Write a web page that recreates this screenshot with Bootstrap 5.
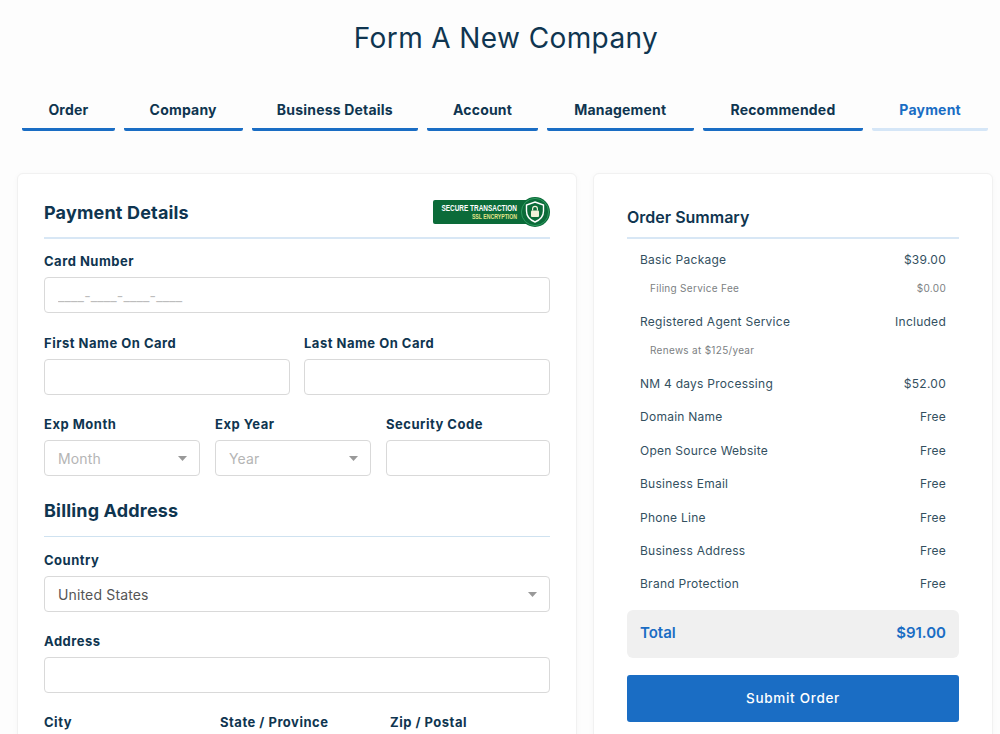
<!DOCTYPE html>
<html lang="en">
<head>
<meta charset="utf-8">
<title>Form A New Company</title>
<link rel="stylesheet" href="https://cdn.jsdelivr.net/npm/bootstrap@5.3.0/dist/css/bootstrap.min.css">
<style>
html,body{height:734px;overflow:hidden}
body{background:#fdfdfd;font-family:Inter,"Liberation Sans",sans-serif;color:#0f3550}
.page-wrap{padding:0 7px 0 17px}
.page-title{font-size:28px;font-weight:400;letter-spacing:.4px;line-height:36px;margin:0;padding-top:20px;text-align:center;color:#0f3550;padding-left:2px}
.step-bar{display:grid;grid-template-columns:93fr 119fr 167fr 111fr 147fr 161fr 116fr;column-gap:9px;margin:44px 5px 42px 5px}
.step-item{font-size:14px;font-weight:700;letter-spacing:.2px;text-align:center;color:#0f3550;padding-bottom:8px;line-height:20px;border-bottom:3px solid #1a6dc4;border-radius:2px}
.step-item.is-now{color:#1a6dc4;border-bottom-color:#d5e6f7}
.main-grid{display:grid;grid-template-columns:560px 400px;column-gap:16px}
.pane{background:#fff;border:1px solid #f1f1f1;border-radius:6px;box-shadow:0 1px 6px rgba(0,0,0,.03)}
.pane-left{padding:27px 26px 30px;height:700px}
.pane-right{padding:31px 33px 30px;height:700px}
.pane-head{display:flex;justify-content:space-between;align-items:center;border-bottom:2px solid #d8e7f5;padding-bottom:12px;box-sizing:content-box;height:24px}
.pane-head h2,.bill-head{font-size:18px;font-weight:700;letter-spacing:.17px;margin:0;color:#0f3550;line-height:24px}
.badge-art{margin-right:-1px;margin-top:-2px}
.bill-head{border-bottom:1px solid #cfe2f0;padding-bottom:13px;margin-top:23px}
.fld-label{display:block;font-size:13px;font-weight:700;letter-spacing:.5px;color:#0f3550;line-height:18px;margin:0 0 7px}
.form-control.fld,.form-select.fld{height:36px;font-size:14px;letter-spacing:.15px;padding:0 13px;border:1px solid #d9d9d9;border-radius:4px;color:#555;background-color:#fff;box-shadow:none}
.form-select.fld{background-image:url("data:image/svg+xml,%3Csvg xmlns='http://www.w3.org/2000/svg' width='10' height='6'%3E%3Cpath d='M0 0h10L5 6z' fill='%23999'/%3E%3C/svg%3E");background-size:9px 5px;background-position:right 12px center}
.form-select.fld.is-blank{color:#b5b5b5}
.form-control.fld::placeholder{color:#bdbdbd}
.fld-first{margin-top:13px}
.fld-country{margin-top:14px}
.fld-address{margin-top:20px}
.two-col{display:grid;grid-template-columns:246px 246px;column-gap:14px;margin-top:21px}
.three-col{display:grid;grid-template-columns:156px 156px 164px;column-gap:15px;margin-top:20px}
.city-col{display:grid;grid-template-columns:161px 155px 160px;column-gap:15px;margin-top:20px}
.sum-head{font-size:16px;font-weight:600;margin:0;color:#0f3550;line-height:24px;padding-bottom:8px;border-bottom:2px solid #d8e7f5}
.sum-list{padding:7px 13px 0}
.sum-row{display:flex;justify-content:space-between;align-items:center;font-size:12px;color:#33505f;height:33.4px;letter-spacing:.26px}
.sum-row.has-sub{height:28px}
.sum-sub{display:flex;justify-content:space-between;align-items:center;font-size:10px;letter-spacing:.3px;color:#7c7f83;height:28px;padding-left:10px;margin-bottom:6px}
.sum-sub.is-last{margin-bottom:3.3px}
.total-box{display:flex;justify-content:space-between;align-items:center;height:48px;background:#f0f0f0;border-radius:6px;padding:0 13px;margin-top:8.5px;font-size:15px;font-weight:600;color:#1a6dc4}
.submit-btn{display:block;width:100%;height:47px;margin-top:17px;background:#1a6dc4;border:0;border-radius:3px;color:#fff;font-size:13.5px;font-weight:500;letter-spacing:.7px}
.submit-btn:hover{background:#1a6dc4;color:#fff}
</style>
</head>
<body>
<div class="page-wrap">
  <h1 class="page-title">Form A New Company</h1>
  <div class="step-bar">
    <div class="step-item">Order</div>
    <div class="step-item">Company</div>
    <div class="step-item">Business Details</div>
    <div class="step-item">Account</div>
    <div class="step-item">Management</div>
    <div class="step-item">Recommended</div>
    <div class="step-item is-now">Payment</div>
  </div>
  <div class="main-grid">
    <div class="pane pane-left">
      <div class="pane-head">
        <h2>Payment Details</h2>
        <svg class="badge-art" width="118" height="32" viewBox="0 0 118 32" role="img" aria-label="Secure Transaction SSL Encryption">
          <rect x="0" y="4" width="104" height="24" rx="2" fill="#0b6b39"/>
          <circle cx="102" cy="16" r="15" fill="#0b6b39"/>
          <circle cx="102" cy="16" r="13.6" fill="none" stroke="#2e9a5f" stroke-width="1"/>
          <path d="M102 6l8.5 3v6c0 5.5-3.5 9-8.5 11-5-2-8.5-5.5-8.5-11V9z" fill="none" stroke="#fff" stroke-width="1.4"/>
          <rect x="98" y="14.5" width="8" height="6.5" rx="1" fill="#f0f0d8"/>
          <path d="M99.6 14.5v-1.8a2.4 2.4 0 0 1 4.8 0v1.8" fill="none" stroke="#f0f0d8" stroke-width="1.2"/>
          <text transform="translate(84 15) scale(.68 1)" text-anchor="end" font-family="Liberation Sans" font-size="9.5" font-weight="700" fill="#fff">SECURE TRANSACTION</text>
          <text transform="translate(84 23) scale(.74 1)" text-anchor="end" font-family="Liberation Sans" font-size="7" font-weight="700" fill="#e3e58a">SSL ENCRYPTION</text>
        </svg>
      </div>
      <div class="fld-first">
        <label class="fld-label">Card Number</label>
        <input class="form-control fld" placeholder="____-____-____-____">
      </div>
      <div class="two-col">
        <div><label class="fld-label">First Name On Card</label><input class="form-control fld"></div>
        <div><label class="fld-label">Last Name On Card</label><input class="form-control fld"></div>
      </div>
      <div class="three-col">
        <div><label class="fld-label">Exp Month</label><select class="form-select fld is-blank"><option>Month</option></select></div>
        <div><label class="fld-label">Exp Year</label><select class="form-select fld is-blank"><option>Year</option></select></div>
        <div><label class="fld-label">Security Code</label><input class="form-control fld"></div>
      </div>
      <h2 class="bill-head">Billing Address</h2>
      <div class="fld-country">
        <label class="fld-label">Country</label>
        <select class="form-select fld"><option>United States</option></select>
      </div>
      <div class="fld-address">
        <label class="fld-label">Address</label>
        <input class="form-control fld">
      </div>
      <div class="city-col">
        <div><label class="fld-label">City</label><input class="form-control fld"></div>
        <div><label class="fld-label">State / Province</label><input class="form-control fld"></div>
        <div><label class="fld-label">Zip / Postal</label><input class="form-control fld"></div>
      </div>
    </div>
    <div class="pane pane-right">
      <h3 class="sum-head">Order Summary</h3>
      <div class="sum-list">
        <div class="sum-row has-sub"><span>Basic Package</span><span>$39.00</span></div>
        <div class="sum-sub"><span>Filing Service Fee</span><span>$0.00</span></div>
        <div class="sum-row has-sub"><span>Registered Agent Service</span><span>Included</span></div>
        <div class="sum-sub is-last"><span>Renews at $125/year</span></div>
        <div class="sum-row"><span>NM 4 days Processing</span><span>$52.00</span></div>
        <div class="sum-row"><span>Domain Name</span><span>Free</span></div>
        <div class="sum-row"><span>Open Source Website</span><span>Free</span></div>
        <div class="sum-row"><span>Business Email</span><span>Free</span></div>
        <div class="sum-row"><span>Phone Line</span><span>Free</span></div>
        <div class="sum-row"><span>Business Address</span><span>Free</span></div>
        <div class="sum-row"><span>Brand Protection</span><span>Free</span></div>
      </div>
      <div class="total-box"><span>Total</span><span>$91.00</span></div>
      <button type="button" class="btn submit-btn">Submit Order</button>
    </div>
  </div>
</div>
<script src="https://cdn.jsdelivr.net/npm/bootstrap@5.3.0/dist/js/bootstrap.bundle.min.js"></script>
</body>
</html>
